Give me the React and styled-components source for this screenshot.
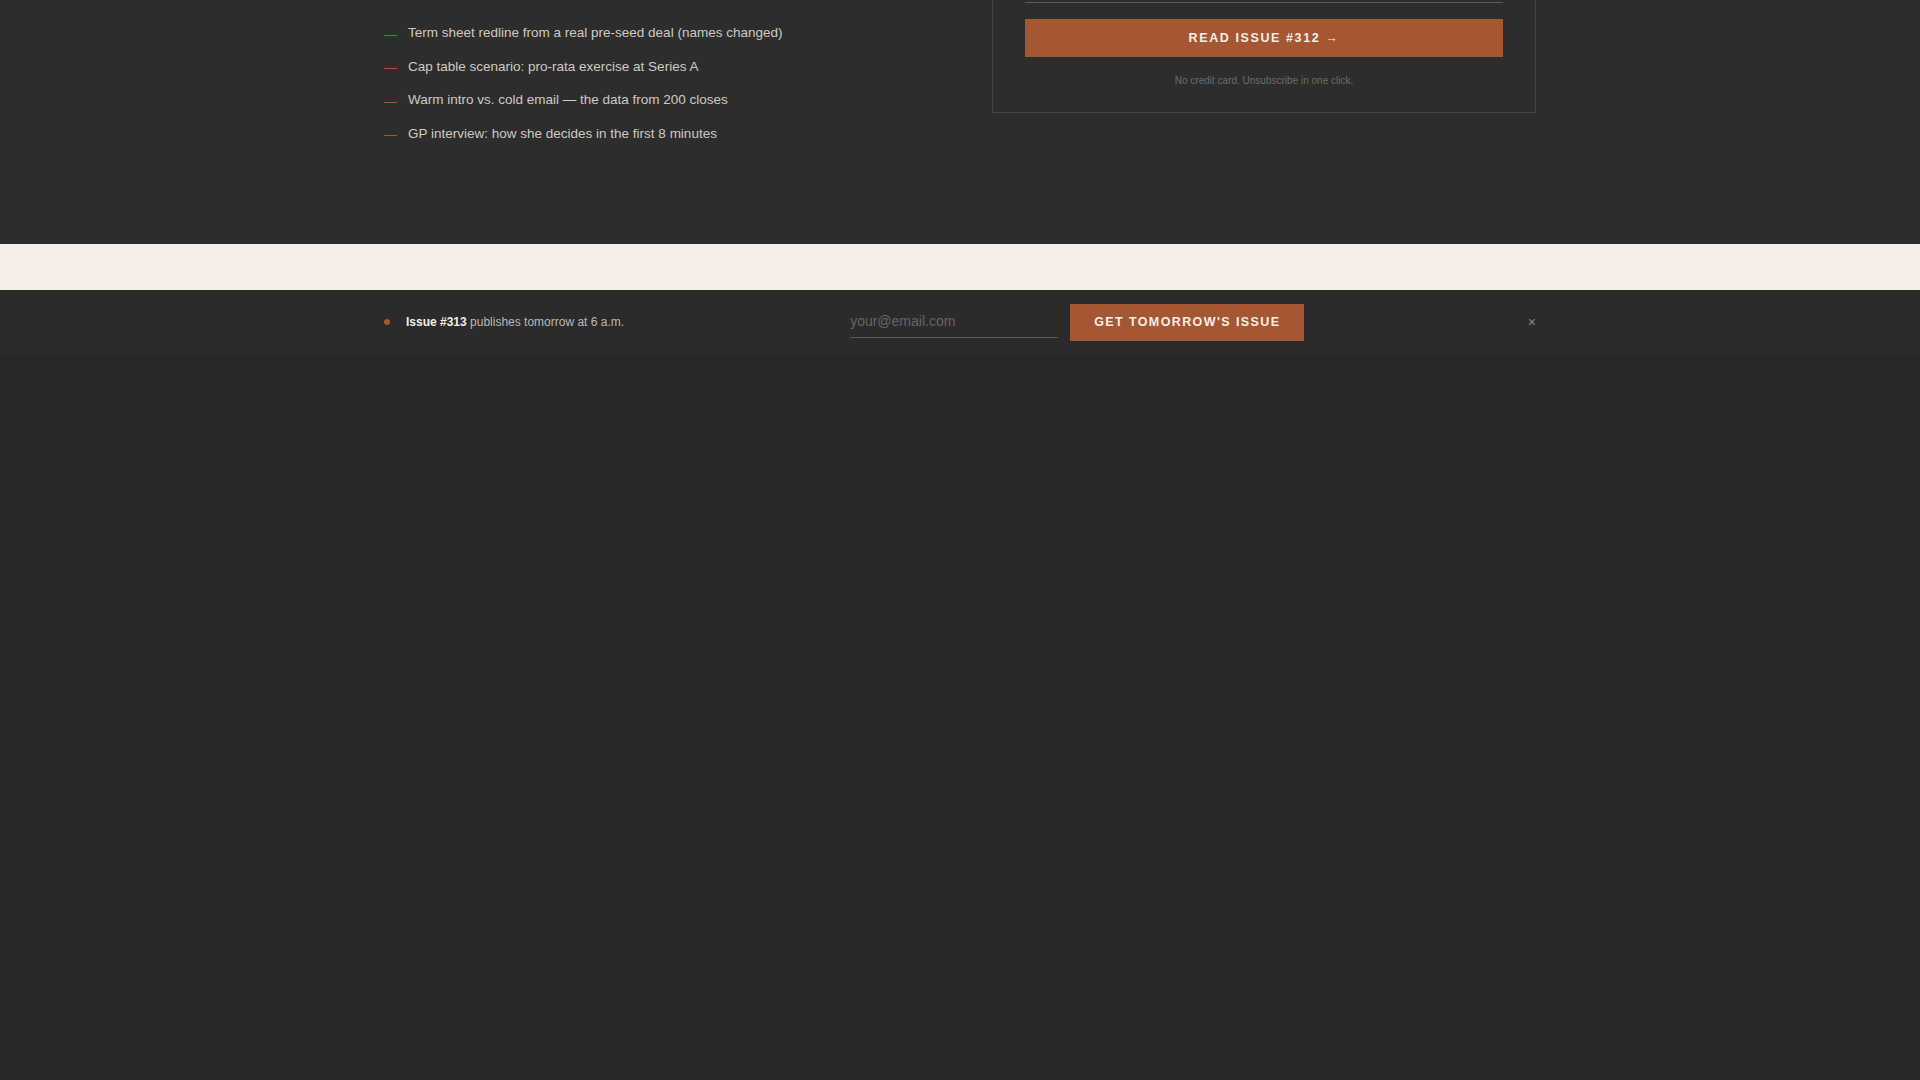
import React from "react";
import styled, { createGlobalStyle } from "styled-components";

const Global = createGlobalStyle`
  html,body{margin:0;padding:0;background:#282828;font-family:"Liberation Sans",Arial,sans-serif;}
`;
const Page = styled.div`min-height:1080px;background:#282828;`;
const Top = styled.section`background:#2d2d2d;height:244px;`;
const Container = styled.div`width:1152px;margin:0 auto;box-sizing:border-box;`;
const Grid = styled(Container)`display:grid;grid-template-columns:1fr 1fr;gap:64px;align-items:start;`;
const List = styled.ul`list-style:none;margin:0;padding:24px 0 0;display:flex;flex-direction:column;gap:16.5px;`;
const Item = styled.li`display:flex;align-items:center;gap:11px;color:#cfcac2;font-size:13.5px;line-height:17px;`;
const Dash = styled.span`display:inline-block;width:13px;height:1px;background:#a55632;margin-top:5px;flex:none;`;
const Card = styled.div`border:1px solid #444;border-top:none;padding:0 32px 26px;margin-top:-10px;`;
const Rule = styled.div`height:1px;background:#5a5a5a;margin-top:12px;`;
const Btn = styled.button`display:block;width:100%;height:38px;margin-top:16px;border:none;background:#a55632;color:#f5efe7;font-family:inherit;font-weight:700;font-size:12.5px;letter-spacing:1.6px;`;
const Note = styled.p`margin:18px 0 0;text-align:center;color:#6c6c6c;font-size:10px;`;
const Band = styled.div`height:46px;background:#f5efe7;`;
const Bar = styled.div`background:#2b2b2b;height:64px;`;
const BarInner = styled(Container)`height:100%;display:flex;align-items:center;`;
const Dot = styled.span`width:6px;height:6px;border-radius:50%;background:#a55632;margin-right:16px;`;
const Msg = styled.span`color:#bdb8b0;font-size:12px;b{color:#f5efe7;}`;
const Input = styled.input`margin-left:226px;width:208px;background:transparent;border:none;border-bottom:1px solid #5a5a5a;color:#ddd;font-family:inherit;font-size:14px;padding:6px 0 8px;outline:none;&::placeholder{color:#666;}`;
const Cta = styled.button`margin-left:12px;height:37px;padding:0 24px;border:none;background:#a55632;color:#f5efe7;font-family:inherit;font-weight:700;font-size:12.5px;letter-spacing:1.4px;`;
const Close = styled.span`margin-left:auto;color:#888;font-size:14px;`;

const items=["Term sheet redline from a real pre-seed deal (names changed)","Cap table scenario: pro-rata exercise at Series A","Warm intro vs. cold email — the data from 200 closes","GP interview: how she decides in the first 8 minutes"];

export default function App(){
  return <Page><Global/>
    <Top><Grid>
      <List>{items.map(t=><Item key={t}><Dash/>{t}</Item>)}</List>
      <Card><Rule/><Btn>READ ISSUE #312 →</Btn><Note>No credit card. Unsubscribe in one click.</Note></Card>
    </Grid></Top>
    <Band/>
    <Bar><BarInner>
      <Dot/><Msg><b>Issue #313</b> publishes tomorrow at 6 a.m.</Msg>
      <Input placeholder="your@email.com"/>
      <Cta>GET TOMORROW'S ISSUE</Cta>
      <Close>×</Close>
    </BarInner></Bar>
  </Page>;
}
